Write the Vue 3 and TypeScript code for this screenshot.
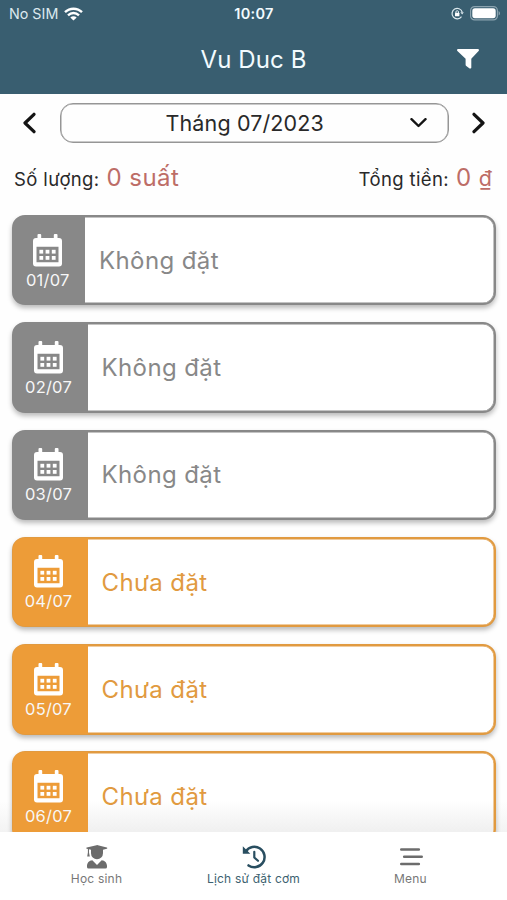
<script setup lang="ts">
interface Day {
  date: string
  label: string
  state: 'none' | 'pending'
}

const days: Day[] = [
  { date: '01/07', label: 'Không đặt', state: 'none' },
  { date: '02/07', label: 'Không đặt', state: 'none' },
  { date: '03/07', label: 'Không đặt', state: 'none' },
  { date: '04/07', label: 'Chưa đặt', state: 'pending' },
  { date: '05/07', label: 'Chưa đặt', state: 'pending' },
  { date: '06/07', label: 'Chưa đặt', state: 'pending' },
]
</script>

<template>
  <div class="screen">
    <header class="header">
      <div class="status">
        <div class="carrier">
          <span>No SIM</span>
          <svg width="19" height="14" viewBox="0 0 19 14" fill="none" stroke="#fff" stroke-width="2.4">
            <path d="M1 5.2C5.8.5 13.2.5 18 5.2" />
            <path d="M4 8.3c3.2-3 7.800-3 11 0" />
            <path d="M9.500 13.500L6.300 10.400c1.900-1.500 4.500-1.500 6.400 0z" fill="#fff" stroke="none" />
          </svg>
        </div>
        <span class="clock">10:07</span>
        <div class="power">
          <svg width="13" height="13" viewBox="0 0 13 13" fill="none" stroke="#dce9ee" stroke-width="1.200">
            <path d="M10.500 9.600A5.200 5.200 0 1 1 11.200 5" />
            <path d="M9.300 5.200h3.500L11.200 7.600z" fill="#dce9ee" stroke="none" />
            <path d="M4.900 6V5a1.300 1.300 0 0 1 2.600 0v1" stroke-width="1" />
            <rect x="4" y="5.800" width="4.400" height="3.400" rx=".5" fill="#fff" stroke="none" />
          </svg>
          <svg width="31" height="15" viewBox="0 0 31 15">
            <rect x=".6" y=".6" width="26.800" height="13.300" rx="4" fill="none" stroke="#8ba3af" stroke-width="1.200" />
            <rect x="2.300" y="2.300" width="23.400" height="9.900" rx="2.600" fill="#fff" />
            <path d="M28.600 5v4.600c1.900-.8 1.900-3.800 0-4.600z" fill="#8ba3af" />
          </svg>
        </div>
      </div>
      <div class="titlebar">
        <h1>Vu Duc B</h1>
        <svg class="filter" width="22" height="20" viewBox="0 0 22 20" fill="#fff">
          <path d="M1.200 0h19.600c1 0 1.500 1.200.8 2L14.300 9.800v8.600c0 1-.9 1.500-1.700 1l-3.300-2.300a1.600 1.600 0 0 1-.7-1.300v-6L.4 2C-.3 1.200.2 0 1.200 0z" />
        </svg>
      </div>
    </header>

    <div class="month">
      <svg width="14" height="24" viewBox="0 0 14 24"><path d="M12 3.300L3 12l9 8.700" /></svg>
      <div class="select">
        <span>Tháng 07/2023</span>
        <svg class="caret" width="17" height="11" viewBox="0 0 17 11"><path d="M1.500 1.200l7 6.800 7-6.800" /></svg>
      </div>
      <svg width="14" height="24" viewBox="0 0 14 24"><path d="M2 3.300l9 8.700-9 8.700" /></svg>
    </div>

    <div class="summary">
      <div class="total"><span class="key">Số lượng:</span><span class="value">0 suất</span></div>
      <div class="total"><span class="key">Tổng tiền:</span><span class="value">0 <span class="unit">₫</span></span></div>
    </div>

    <main class="list">
      <article v-for="day in days" :key="day.date" class="card" :class="day.state">
        <div class="date">
          <svg width="29" height="33" viewBox="0 0 29 33">
            <path fill="#fff" fill-rule="evenodd" d="M5.500 0h1.700a1 1 0 0 1 1 1v3h12.600V1a1 1 0 0 1 1-1h1.700a1 1 0 0 1 1 1v3H26a3 3 0 0 1 3 3v22.500a3 3 0 0 1-3 3H3a3 3 0 0 1-3-3V7a3 3 0 0 1 3-3h1.500V1a1 1 0 0 1 1-1zM3.500 12.700v15.600h22V12.700z" />
            <g fill="#fff">
              <rect x="6.400" y="15.800" width="3.800" height="3.800" /><rect x="12.600" y="15.800" width="3.800" height="3.800" /><rect x="18.800" y="15.800" width="3.800" height="3.800" />
              <rect x="6.400" y="22" width="3.800" height="3.800" /><rect x="12.600" y="22" width="3.800" height="3.800" /><rect x="18.800" y="22" width="3.800" height="3.800" />
            </g>
          </svg>
          <span>{{ day.date }}</span>
        </div>
        <div class="label">{{ day.label }}</div>
      </article>
    </main>

    <nav class="tabs">
      <div class="tab">
        <svg width="22" height="24" viewBox="0 0 22 24" fill="#6c6c6c">
          <path d="M.8 2.500L10.500.2q.7-.2 1.400 0l8.900 2.300c.7.200.7 1 0 1.200L17 4.700v3.500a6 6 0 0 1-12 0V4.700l-2-.5v3.200l.8 4.100H1.200l.7-4.100V4L.8 3.700c-.7-.2-.7-1 0-1.200z" />
          <path d="M6.300 15.200L11 20l4.700-4.800c3.300.3 5.300 2.700 5.300 5.800v1a1.600 1.600 0 0 1-1.600 1.600H2.600A1.600 1.600 0 0 1 1 22v-1c0-3.100 2-5.500 5.300-5.800z" />
        </svg>
        <span>Học sinh</span>
      </div>
      <div class="tab active">
        <svg width="24" height="24" viewBox="0 0 24 24" fill="none" stroke="#294e60" stroke-width="2.500">
          <path d="M3.800 6.500A10.200 10.200 0 1 1 6.500 20.400" stroke-linecap="round" />
          <path d="M.8 1.300v7.500h7.500z" fill="#294e60" stroke="none" />
          <path d="M12.300 6.800v5.700l3.700 3.300" stroke-width="2.200" stroke-linecap="round" stroke-linejoin="round" />
        </svg>
        <span>Lịch sử đặt cơm</span>
      </div>
      <div class="tab">
        <svg width="24" height="24" viewBox="0 0 24 24" fill="none" stroke="#6c6c6c" stroke-width="2.600" stroke-linecap="round">
          <path d="M2.300 4.500h17.500M5.200 11.800h17.500M2.300 19h17.500" />
        </svg>
        <span>Menu</span>
      </div>
    </nav>
  </div>
</template>

<style>
body {
  margin: 0;
  background: #fff;
}
</style>

<style scoped>
.screen {
  box-sizing: border-box;
  width: 507px;
  height: 900px;
  display: flex;
  flex-direction: column;
  overflow: hidden;
  background: #fefefe;
  color: #292929;
  font-family: Inter, "Liberation Sans", sans-serif;
}
svg {
  display: block;
  flex: none;
}
.header {
  height: 93.500px;
  flex: none;
  background: #395e70;
  color: #f2fbff;
}
.status {
  height: 27px;
  padding: 0 8px 0 9px;
  display: grid;
  grid-template-columns: 1fr auto 1fr;
  align-items: center;
  font-size: 14.300px;
}
.carrier,
.power {
  display: flex;
  align-items: center;
  gap: 6px;
}
.carrier {
  color: #dce9ee;
}
.power {
  justify-content: flex-end;
  margin-right: -2px;
}
.clock {
  font-weight: 600;
  font-size: 14.500px;
  letter-spacing: 0.300px;
}
.titlebar {
  height: 64.500px;
  padding: 0 28px;
  display: grid;
  grid-template-columns: 22px 1fr 22px;
  align-items: center;
}
h1 {
  grid-column: 2;
  margin: 0;
  text-align: center;
  font-size: 24px;
  font-weight: 400;
  letter-spacing: 0.100px;
}
.month {
  height: 40px;
  margin-top: 9.500px;
  padding: 0 21px 0 22px;
  flex: none;
  display: flex;
  align-items: center;
  justify-content: space-between;
}
.month path {
  fill: none;
  stroke: #141414;
  stroke-width: 3.200;
  stroke-linecap: round;
  stroke-linejoin: round;
}
.select {
  box-sizing: border-box;
  width: 389px;
  height: 40px;
  padding: 0 21px 0 105px;
  display: flex;
  align-items: center;
  justify-content: space-between;
  border: 1px solid #969696;
  box-shadow: inset 0 0 0 0.500px #969696;
  border-radius: 13px;
  font-size: 21.500px;
  letter-spacing: 0.130px;
}
.month .caret path {
  stroke-width: 2.400;
}
.summary {
  height: 72px;
  padding: 0 15px 4px 14px;
  box-sizing: border-box;
  flex: none;
  display: flex;
  justify-content: space-between;
  align-items: center;
}
.total {
  display: flex;
  align-items: baseline;
  gap: 7px;
}
.key {
  font-size: 18.500px;
  letter-spacing: 0.380px;
}
.value {
  font-size: 24px;
  letter-spacing: 0.450px;
  color: #bd6d67;
}
.unit {
  font-size: 21.500px;
  letter-spacing: 0;
}
.list {
  flex: 1;
  min-height: 0;
  padding: 0 11px 0 11.500px;
  display: flex;
  flex-direction: column;
  gap: 16.900px;
  overflow: hidden;
  background: linear-gradient(#fefefe 95%, #f3f3f3);
}
.card {
  --tone: #888;
  --fill: #888;
  box-sizing: border-box;
  height: 90.400px;
  flex: none;
  display: flex;
  border: 2px solid var(--tone);
  border-radius: 13px;
  background: #fff;
  box-shadow: inset 0 0 0 0.500px var(--tone), 0 3px 5px #0004;
}
.card.pending {
  --tone: #e19a40;
  --fill: #ed9c38;
}
.card:last-child {
  background: linear-gradient(#fff 55%, #f0f0f0 90%);
}
.date {
  width: 75px;
  margin: -1px 0 -1px -1px;
  box-sizing: border-box;
  display: flex;
  flex-direction: column;
  align-items: center;
  padding: 17.500px 3px 0 0;
  gap: 4px;
  border-radius: 11px 0 0 11px;
  background: var(--fill);
  color: #f7f7f7;
  font-size: 16.500px;
  line-height: 19px;
  letter-spacing: 0.200px;
}
.card:first-child .date {
  width: 72.500px;
  padding-right: 2px;
}
.label {
  padding-left: 14px;
  align-self: center;
  color: var(--tone);
  font-size: 24px;
  letter-spacing: 0.400px;
}
.tabs {
  height: 68px;
  padding: 0 18px;
  flex: none;
  display: grid;
  grid-template-columns: repeat(3, 1fr);
  background: #fff;
}
.tab {
  display: flex;
  flex-direction: column;
  align-items: center;
  padding-top: 13px;
  gap: 2px;
  color: #777;
  font-size: 12px;
  line-height: 16px;
  letter-spacing: 0.200px;
  white-space: nowrap;
}
.tab.active {
  color: #3d6270;
}
</style>
